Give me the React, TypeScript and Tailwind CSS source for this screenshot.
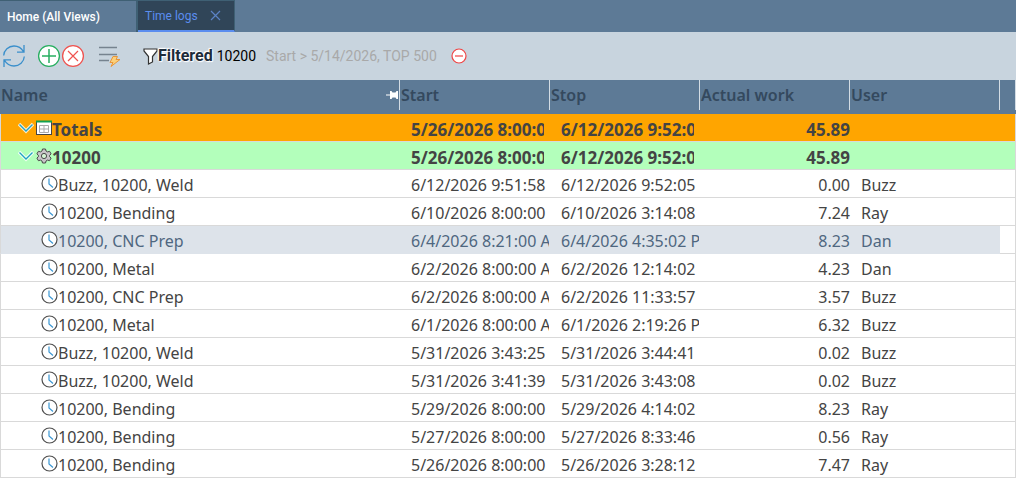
import React, { useState } from 'react';

interface LogRow {
  id: number;
  name: string;
  start: string;
  stop: string;
  work: string;
  user: string;
}

const logs: LogRow[] = [
  { id: 1, name: 'Buzz, 10200, Weld', start: '6/12/2026 9:51:58 AM', stop: '6/12/2026 9:52:05 AM', work: '0.00', user: 'Buzz' },
  { id: 2, name: '10200, Bending', start: '6/10/2026 8:00:00 AM', stop: '6/10/2026 3:14:08 PM', work: '7.24', user: 'Ray' },
  { id: 3, name: '10200, CNC Prep', start: '6/4/2026 8:21:00 AM', stop: '6/4/2026 4:35:02 PM', work: '8.23', user: 'Dan' },
  { id: 4, name: '10200, Metal', start: '6/2/2026 8:00:00 AM', stop: '6/2/2026 12:14:02 PM', work: '4.23', user: 'Dan' },
  { id: 5, name: '10200, CNC Prep', start: '6/2/2026 8:00:00 AM', stop: '6/2/2026 11:33:57 AM', work: '3.57', user: 'Buzz' },
  { id: 6, name: '10200, Metal', start: '6/1/2026 8:00:00 AM', stop: '6/1/2026 2:19:26 PM', work: '6.32', user: 'Buzz' },
  { id: 7, name: 'Buzz, 10200, Weld', start: '5/31/2026 3:43:25 PM', stop: '5/31/2026 3:44:41 PM', work: '0.02', user: 'Buzz' },
  { id: 8, name: 'Buzz, 10200, Weld', start: '5/31/2026 3:41:39 PM', stop: '5/31/2026 3:43:08 PM', work: '0.02', user: 'Buzz' },
  { id: 9, name: '10200, Bending', start: '5/29/2026 8:00:00 AM', stop: '5/29/2026 4:14:02 PM', work: '8.23', user: 'Ray' },
  { id: 10, name: '10200, Bending', start: '5/27/2026 8:00:00 AM', stop: '5/27/2026 8:33:46 AM', work: '0.56', user: 'Ray' },
  { id: 11, name: '10200, Bending', start: '5/26/2026 8:00:00 AM', stop: '5/26/2026 3:28:12 PM', work: '7.47', user: 'Ray' },
];

function RefreshIcon() {
  return (
    <svg width="22" height="22" viewBox="0 0 22 22" fill="none" stroke="#3a8fcb" strokeWidth="1.300">
      <path d="M0.700 10.500C1 5 5.500 1 11 1C15 1 18.500 3.200 20.500 6.800M21 0V7.200H14" />
      <path d="M21.300 11.500C21 17 16.500 21 11 21C7 21 3.500 18.800 1.500 15.200M1 22V14.800H8" />
    </svg>
  );
}

function AddIcon() {
  return (
    <svg width="24" height="24" viewBox="0 0 24 24" fill="none" stroke="#27ae60">
      <circle cx="12" cy="12" r="10.400" fill="#fff" strokeWidth="1.300" />
      <path d="M12 5V19M5 12H19" strokeWidth="1.500" />
    </svg>
  );
}

function DeleteIcon() {
  return (
    <svg width="24" height="24" viewBox="0 0 24 24" fill="none" stroke="#ef5350">
      <circle cx="12" cy="12" r="10.400" fill="#fff" strokeWidth="1.300" />
      <path d="M7 7L17 17M17 7L7 17" strokeWidth="1.200" />
    </svg>
  );
}

function ActionsIcon() {
  return (
    <svg width="22" height="22" viewBox="0 0 22 22" fill="none">
      <path d="M0 2.500H18M0 9.500H18M0 15.500H10" stroke="#76838f" strokeWidth="1.300" />
      <path d="M14 11.500H18.500L17 14.500H21L12 21.500L14 17.500H11Z" fill="#fcd07a" stroke="#e8963a" />
    </svg>
  );
}

function FunnelIcon() {
  return (
    <svg width="15" height="17" viewBox="0 0 15 17">
      <path d="M1 1H14V3L9.500 8.500V14L5.500 16V8.500L1 3Z" fill="#fff" stroke="#333" strokeWidth="1.200" />
    </svg>
  );
}

function RemoveFilterIcon() {
  return (
    <svg width="16" height="16" viewBox="0 0 16 16" stroke="#ef4444">
      <circle cx="8" cy="8" r="7" fill="#fff" strokeWidth="1.200" />
      <path d="M4 8H12" strokeWidth="1.200" />
    </svg>
  );
}

function PinIcon() {
  return (
    <svg width="13" height="10" viewBox="0 0 13 10" fill="#fff">
      <path d="M0 4.500H4V1H5.500L6.500 2.500H9.500L10.500 1H12V9H10.500L9.500 7.500H6.500L5.500 9H4V5.500H0Z" />
    </svg>
  );
}

function ChevronIcon() {
  return (
    <svg width="16" height="12" viewBox="0 0 16 12" fill="none">
      <path d="M1 2L8 9L15 2" stroke="#fff" strokeOpacity="0.800" strokeWidth="3.500" />
      <path d="M1.500 2.500L8 9L14.500 2.500" stroke="#1fa3c4" strokeWidth="1.300" />
    </svg>
  );
}

function TotalsIcon() {
  return (
    <svg width="16" height="16" viewBox="0 0 16 16" fill="none">
      <rect x="0.500" y="1.500" width="15" height="13" fill="#fff" stroke="#444" />
      <path d="M0 1.500H16" stroke="#12a150" strokeWidth="2" />
      <path d="M3.500 5.500H12.500V12.500H3.500ZM3.500 9H12.500M8 5.500V12.500" stroke="#aaa" />
    </svg>
  );
}

function GearIcon() {
  return (
    <svg width="16" height="16" viewBox="0 0 16 16" fill="none" stroke="#4a4a4a">
      <path
        d="M6.500 1H9.500L10 3L11.500 3.900L13.600 3.300L15.100 5.900L13.600 7.300V8.700L15.100 10.100L13.600 12.700L11.500 12.100L10 13L9.500 15H6.500L6 13L4.500 12.100L2.400 12.700L0.900 10.100L2.400 8.700V7.300L0.900 5.900L2.400 3.300L4.500 3.900L6 3Z"
        fill="#c8c4c8"
      />
      <circle cx="8" cy="8" r="2.600" fill="#d5f5d5" />
    </svg>
  );
}

function ClockIcon() {
  return (
    <svg width="17" height="17" viewBox="0 0 17 17" fill="none">
      <circle cx="8.500" cy="8.500" r="7.500" fill="#fff" stroke="#505050" strokeWidth="1.200" />
      <path d="M8 3.500V9L12 12.500" stroke="#3b97d3" strokeWidth="1.200" />
    </svg>
  );
}

function HeaderCell({ children, pinned }: { children?: React.ReactNode; pinned?: boolean }) {
  return (
    <th className="p-0 text-left font-semibold align-top">
      <div className="flex items-center justify-between h-[30px] pl-px border-r border-[#d3dce4]">
        <span>{children}</span>
        {pinned && <PinIcon />}
      </div>
    </th>
  );
}

// Dates are wider than their column, the rest is clipped
function DateCell({ value, className = 'mr-px' }: { value: string; className?: string }) {
  return (
    <td className="p-0 pt-1 pl-[11px]">
      <div className={`overflow-hidden ${className}`}>{value}</div>
    </td>
  );
}

interface GroupRowProps {
  name: string;
  icon: React.ReactNode;
  className: string;
  open: boolean;
  onToggle: () => void;
}

function GroupRow({ name, icon, className, open, onToggle }: GroupRowProps) {
  return (
    <tr className={`h-7 text-[17px] font-bold ${className}`}>
      <td className="p-0 pl-[17px]">
        <div className="flex items-center">
          <button type="button" aria-label={`Toggle ${name}`} aria-expanded={open} onClick={onToggle} className="mr-[2px]">
            <ChevronIcon />
          </button>
          {icon}
          <span className="pt-1">{name}</span>
        </div>
      </td>
      <DateCell value="5/26/2026 8:00:00 AM" className="mr-[6px]" />
      <DateCell value="6/12/2026 9:52:05 AM" className="mr-[6px]" />
      <td className="p-0 pt-1 text-right">45.89</td>
      <td />
      <td />
    </tr>
  );
}

export default function App() {
  const [selected, setSelected] = useState(3);
  const [totalsOpen, setTotalsOpen] = useState(true);
  const [groupOpen, setGroupOpen] = useState(true);

  return (
    <div className="bg-white font-['Roboto',sans-serif]">
      {/* Tabs */}
      <nav className="flex h-8 bg-[#5d7a96] text-xs">
        <button type="button" className="w-[138px] pl-[7px] text-left font-medium text-white border-t border-r-2 border-[#3f6074]">
          Home (All Views)
        </button>
        <div className="flex items-center w-[97px] pl-[7px] gap-3 bg-[#304558] border-t border-r border-t-[#3f6074] border-r-[#3f6074] border-b-2 border-b-[#5b8def]">
          <button type="button" className="text-[#5b8def]">Time logs</button>
          <button type="button" aria-label="Close tab">
            <svg width="11" height="11" viewBox="0 0 11 11" stroke="#5b82c4" strokeWidth="1.200">
              <path d="M1 1L10 10M10 1L1 10" />
            </svg>
          </button>
        </div>
      </nav>

      {/* Toolbar */}
      <div className="flex items-center h-12 pl-[3px] bg-[#c8d4de] text-sm">
        <button type="button" aria-label="Refresh" className="mr-3"><RefreshIcon /></button>
        <button type="button" aria-label="Add"><AddIcon /></button>
        <button type="button" aria-label="Delete" className="mr-3.5"><DeleteIcon /></button>
        <button type="button" aria-label="Actions" className="mr-[22px]"><ActionsIcon /></button>
        <button type="button" className="flex items-center">
          <FunnelIcon />
          <span className="text-base font-bold text-[#1d2b3a] [text-shadow:0_0_2px_#fff,0_0_2px_#fff,1px_1px_1px_#fff,-1px_-1px_1px_#fff]">Filtered</span>
        </button>
        <span className="ml-1 text-black">10200</span>
        <span className="ml-2.5 mr-3.5 text-[#a9a9a9]">Start &gt; 5/14/2026, TOP 500</span>
        <button type="button" aria-label="Clear filter"><RemoveFilterIcon /></button>
      </div>

      {/* Time log grid */}
      <table className="w-full table-fixed border-separate border-spacing-0 whitespace-nowrap text-base leading-[23px] text-[#444] font-['Noto_Sans','Open_Sans',sans-serif]">
        <colgroup>
          <col className="w-[400px]" />
          <col className="w-[150px]" />
          <col className="w-[150px]" />
          <col className="w-[150px]" />
          <col className="w-[150px]" />
          <col />
        </colgroup>
        <thead>
          <tr className="h-[34px] bg-[#5d7a96] text-[#34495e]">
            <HeaderCell pinned>Name</HeaderCell>
            <HeaderCell>Start</HeaderCell>
            <HeaderCell>Stop</HeaderCell>
            <HeaderCell>Actual work</HeaderCell>
            <HeaderCell>User</HeaderCell>
            <HeaderCell />
          </tr>
        </thead>
        <tbody className="[&_td]:border-b [&_td]:border-[#d9d9d9] [&_td:first-child]:border-l [&_td:last-child]:border-r">
          <GroupRow name="Totals" icon={<TotalsIcon />} className="bg-[#ffa500]" open={totalsOpen} onToggle={() => setTotalsOpen(!totalsOpen)} />
          {totalsOpen && (
            <GroupRow name="10200" icon={<GearIcon />} className="bg-[#b3ffbb]" open={groupOpen} onToggle={() => setGroupOpen(!groupOpen)} />
          )}
          {totalsOpen && groupOpen && logs.map(row => (
            <tr
              key={row.id}
              onClick={() => setSelected(row.id)}
              className={`h-7 ${row.id === selected ? 'bg-[#dde3ea] text-[#4f6780] [&_td:not(:last-child)]:border-b-[#dde3ea]' : ''}`}
            >
              <td className="p-0 pl-10">
                <div className="flex items-center">
                  <ClockIcon />
                  <span className="pt-1">{row.name}</span>
                </div>
              </td>
              <DateCell value={row.start} />
              <DateCell value={row.stop} />
              <td className="p-0 pt-1 text-right">{row.work}</td>
              <td className="p-0 pt-1 pl-[11px] overflow-hidden">{row.user}</td>
              <td className="p-0 bg-white" />
            </tr>
          ))}
        </tbody>
      </table>
    </div>
  );
}
